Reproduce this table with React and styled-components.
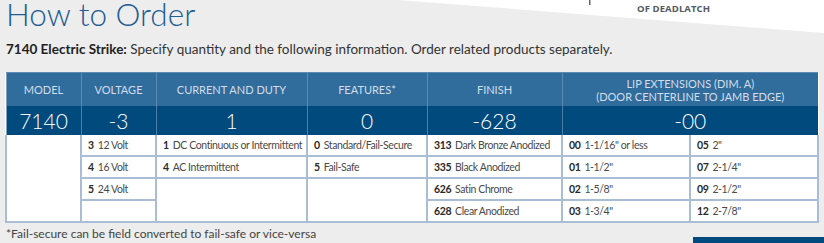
import React from "react";
import styled, { createGlobalStyle } from "styled-components";

const Global = createGlobalStyle`
  html, body { margin: 0; padding: 0; background: #ededed; }
  body { width: 824px; height: 243px; overflow: hidden; font-family: Lato, "Open Sans", sans-serif; }
`;

const Page = styled.div`
  position: relative;
  width: 824px;
  height: 243px;
  padding: 0 7px 0 5px;
  box-sizing: border-box;
  display: flex;
  flex-direction: column;
`;

const Corner = styled.svg`
  position: absolute;
  top: 0;
  left: 0;
`;

const CornerLabel = styled.div`
  position: absolute;
  top: 2px;
  left: 637px;
  font-family: "Open Sans", sans-serif;
  font-weight: 700;
  font-size: 9.5px;
  color: #55595e;
  letter-spacing: 0.1px;
`;

const BottomBar = styled.div`
  position: absolute;
  right: 0;
  bottom: 0;
  width: 131px;
  height: 6px;
  background: #004a7f;
`;

const Title = styled.h1`
  margin: 0;
  padding: 0 0 0 1px;
  font-family: Lato, sans-serif;
  font-weight: 300;
  font-size: 31.5px;
  line-height: 28px;
  color: #1d5c94;
  position: relative;
`;

const Intro = styled.p`
  margin: 12px 0 0 1px;
  font-family: Lato, sans-serif;
  font-size: 13.5px;
  line-height: 18px;
  color: #333;
  b { font-weight: 700; color: #222; }
`;

const Table = styled.table`
  margin-top: 14px;
  width: 812px;
  border-collapse: collapse;
  table-layout: fixed;
  background: #fff;
  font-family: Lato, sans-serif;
`;

const HeadCell = styled.th`
  background: #306c9c;
  color: #d3deea;
  font-weight: 400;
  font-size: 11px;
  line-height: 13px;
  text-transform: uppercase;
  text-align: center;
  height: 33px;
  padding: 0 2px;
  border-left: 1px solid #5b8bb4;
  border-top: 1px solid #5b8bb4;
  &:first-child { border-left: 1px solid #7d9ec0; }
`;

const ValueCell = styled.td`
  background: #004a7e;
  color: #fff;
  font-weight: 300;
  font-size: 21px;
  text-align: center;
  height: 29px;
  padding: 0;
  border-left: 1px solid #4d7ca7;
  &:first-child { border-left: 1px solid #7d9ec0; }
`;

const BodyCell = styled.td`
  height: 20px;
  padding: 0 0 0 6px;
  border: 2px solid #a9bed6;
  border-top: ${(p) => (p.$first ? "0" : "2px solid #a9bed6")};
  font-size: 10.5px;
  color: #4a4a4a;
  letter-spacing: -0.4px;
  white-space: nowrap;
  vertical-align: middle;
  b { font-weight: 700; color: #2a2a2a; margin-right: 4px; }
`;

const Note = styled.p`
  margin: 3px 0 0 1px;
  font-family: Lato, sans-serif;
  font-size: 12px;
  line-height: 15px;
  color: #444;
`;

const Item = ({ code, label }) => (
  <>
    <b>{code}</b>
    {label}
  </>
);

export default function App() {
  return (
    <>
      <Global />
      <Page>
        <Corner width="824" height="40" viewBox="0 0 824 40">
          <polygon points="398,0 824,0 824,33" fill="#ffffff" />
          <rect x="589" y="0" width="1.5" height="5" fill="#666" />
        </Corner>
        <CornerLabel>OF DEADLATCH</CornerLabel>
        <Title>How to Order</Title>
        <Intro>
          <b>7140 Electric Strike:</b> Specify quantity and the following information. Order related products separately.
        </Intro>
        <Table>
          <colgroup>
            <col style={{ width: 75 }} />
            <col style={{ width: 75 }} />
            <col style={{ width: 151 }} />
            <col style={{ width: 120 }} />
            <col style={{ width: 135 }} />
            <col style={{ width: 128 }} />
            <col style={{ width: 128 }} />
          </colgroup>
          <thead>
            <tr>
              <HeadCell>Model</HeadCell>
              <HeadCell>Voltage</HeadCell>
              <HeadCell>Current and Duty</HeadCell>
              <HeadCell>Features*</HeadCell>
              <HeadCell>Finish</HeadCell>
              <HeadCell colSpan={2}>
                Lip Extensions (Dim. A)
                <br />
                (Door Centerline to Jamb Edge)
              </HeadCell>
            </tr>
            <tr>
              <ValueCell>7140</ValueCell>
              <ValueCell>-3</ValueCell>
              <ValueCell>1</ValueCell>
              <ValueCell>0</ValueCell>
              <ValueCell>-628</ValueCell>
              <ValueCell colSpan={2}>-00</ValueCell>
            </tr>
          </thead>
          <tbody>
            <tr>
              <BodyCell $first rowSpan={4} />
              <BodyCell $first><Item code="3" label="12 Volt" /></BodyCell>
              <BodyCell $first><Item code="1" label="DC Continuous or Intermittent" /></BodyCell>
              <BodyCell $first><Item code="0" label="Standard/Fail-Secure" /></BodyCell>
              <BodyCell $first><Item code="313" label="Dark Bronze Anodized" /></BodyCell>
              <BodyCell $first><Item code="00" label={'1-1/16" or less'} /></BodyCell>
              <BodyCell $first><Item code="05" label={'2"'} /></BodyCell>
            </tr>
            <tr>
              <BodyCell><Item code="4" label="16 Volt" /></BodyCell>
              <BodyCell><Item code="4" label="AC Intermittent" /></BodyCell>
              <BodyCell><Item code="5" label="Fail-Safe" /></BodyCell>
              <BodyCell><Item code="335" label="Black Anodized" /></BodyCell>
              <BodyCell><Item code="01" label={'1-1/2"'} /></BodyCell>
              <BodyCell><Item code="07" label={'2-1/4"'} /></BodyCell>
            </tr>
            <tr>
              <BodyCell><Item code="5" label="24 Volt" /></BodyCell>
              <BodyCell rowSpan={2} />
              <BodyCell rowSpan={2} />
              <BodyCell><Item code="626" label="Satin Chrome" /></BodyCell>
              <BodyCell><Item code="02" label={'1-5/8"'} /></BodyCell>
              <BodyCell><Item code="09" label={'2-1/2"'} /></BodyCell>
            </tr>
            <tr>
              <BodyCell />
              <BodyCell><Item code="628" label="Clear Anodized" /></BodyCell>
              <BodyCell><Item code="03" label={'1-3/4"'} /></BodyCell>
              <BodyCell><Item code="12" label={'2-7/8"'} /></BodyCell>
            </tr>
          </tbody>
        </Table>
        <Note>*Fail-secure can be field converted to fail-safe or vice-versa</Note>
        <BottomBar />
      </Page>
    </>
  );
}
